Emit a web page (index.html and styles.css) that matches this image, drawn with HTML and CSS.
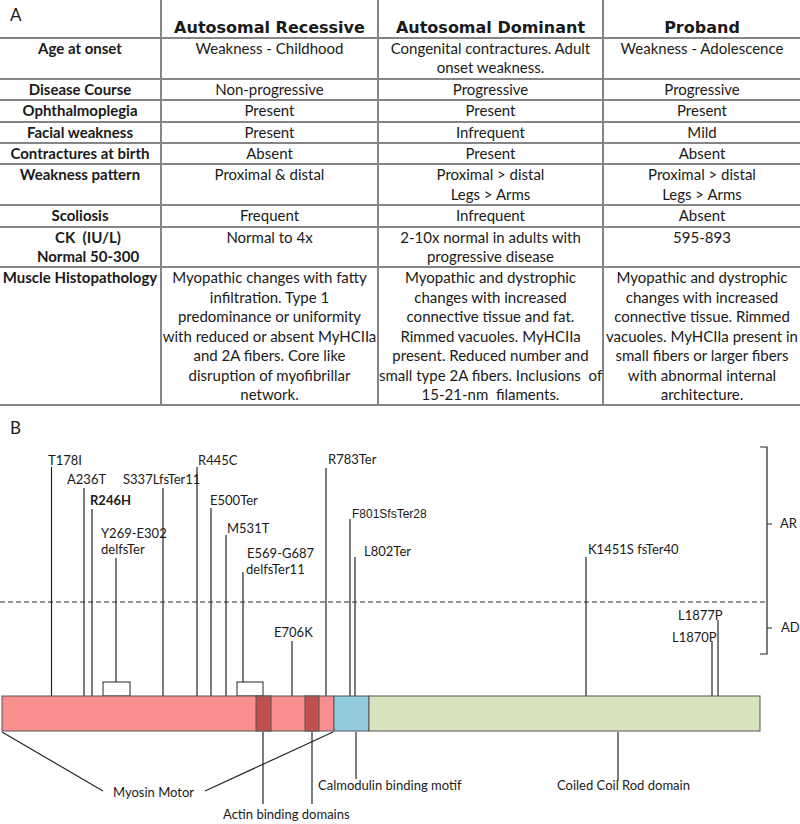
FILE: index.html
```html
<!DOCTYPE html>
<html lang="en">
<head>
<meta charset="utf-8">
<title>MYH2 myopathy comparison</title>
<link rel="stylesheet" href="styles.css">
</head>
<body>
<table class="traits">
  <colgroup><col class="c1"><col class="c2"><col class="c3"><col class="c4"></colgroup>
  <thead>
    <tr class="head-row">
      <th class="panel-letter">A</th>
      <th class="col-head">Autosomal Recessive</th>
      <th class="col-head">Autosomal Dominant</th>
      <th class="col-head">Proband</th>
    </tr>
  </thead>
  <tbody>
    <tr><th>Age at onset</th><td>Weakness - Childhood</td><td>Congenital contractures. Adult<br>onset weakness.</td><td>Weakness - Adolescence</td></tr>
    <tr><th>Disease Course</th><td>Non-progressive</td><td>Progressive</td><td>Progressive</td></tr>
    <tr><th>Ophthalmoplegia</th><td>Present</td><td>Present</td><td>Present</td></tr>
    <tr><th>Facial weakness</th><td>Present</td><td>Infrequent</td><td>Mild</td></tr>
    <tr><th>Contractures at birth</th><td>Absent</td><td>Present</td><td>Absent</td></tr>
    <tr><th>Weakness pattern</th><td>Proximal &amp; distal</td><td>Proximal &gt; distal<br>Legs &gt; Arms</td><td>Proximal &gt; distal<br>Legs &gt; Arms</td></tr>
    <tr><th>Scoliosis</th><td>Frequent</td><td>Infrequent</td><td>Absent</td></tr>
    <tr><th class="ck-label">CK&nbsp; (IU/L)<br>Normal 50-300</th><td>Normal to 4x</td><td>2-10x normal in adults with<br>progressive disease</td><td>595-893</td></tr>
    <tr><th>Muscle Histopathology</th>
      <td>Myopathic changes with fatty<br>infiltration. Type 1<br>predominance or uniformity<br>with reduced or absent MyHCIIa<br>and 2A fibers. Core like<br>disruption of myofibrillar<br>network.</td>
      <td>Myopathic and dystrophic<br>changes with increased<br>connective tissue and fat.<br>Rimmed vacuoles. MyHCIIa<br>present. Reduced number and<br>small type 2A fibers. Inclusions&nbsp; of<br>15-21-nm&nbsp; filaments.</td>
      <td>Myopathic and dystrophic<br>changes with increased<br>connective tissue. Rimmed<br>vacuoles. MyHCIIa present in<br>small fibers or larger fibers<br>with abnormal internal<br>architecture.</td>
    </tr>
  </tbody>
</table>

<svg class="diagram" width="800" height="419" viewBox="0 405 800 419" xmlns="http://www.w3.org/2000/svg">
  <text class="panel" x="10" y="433">B</text>

  <!-- AR / AD divider and brackets -->
  <line class="dash" x1="0" y1="601" x2="767" y2="601"/>
  <path class="ln" d="M760,446 L767,446 L767,523 L772,523 M767,523 L767,653 L760,653 M767,627 L772,627"/>
  <text class="lbl" x="780" y="527">AR</text>
  <text class="lbl" x="781" y="631">AD</text>

  <!-- mutation stems -->
  <g class="ln">
    <line x1="51.5" y1="466" x2="51.5" y2="695"/>
    <line x1="84" y1="487" x2="84" y2="695"/>
    <line x1="92" y1="508" x2="92" y2="695"/>
    <line x1="116" y1="557" x2="116" y2="681"/>
    <line x1="163" y1="487" x2="163" y2="695"/>
    <line x1="197" y1="466" x2="197" y2="695"/>
    <line x1="211" y1="507" x2="211" y2="695"/>
    <line x1="226" y1="534" x2="226" y2="695"/>
    <line x1="243" y1="571" x2="243" y2="681"/>
    <line x1="292" y1="640" x2="292" y2="695"/>
    <line x1="326" y1="467" x2="326" y2="695"/>
    <line x1="350" y1="518" x2="350" y2="695"/>
    <line x1="355" y1="556" x2="355" y2="695"/>
    <line x1="586" y1="556" x2="586" y2="695"/>
    <line x1="712" y1="640" x2="712" y2="695"/>
    <line x1="718" y1="619" x2="718" y2="695"/>
  </g>
  <rect class="del-box" x="103" y="681" width="27" height="14"/>
  <rect class="del-box" x="237" y="681" width="26" height="14"/>

  <!-- protein bar -->
  <rect class="motor" x="2" y="695" width="332" height="35"/>
  <rect class="actin" x="256" y="695" width="15" height="35"/>
  <rect class="actin" x="305" y="695" width="14" height="35"/>
  <rect class="calm" x="334" y="695" width="35" height="35"/>
  <rect class="rod" x="369" y="695" width="391" height="35"/>

  <!-- domain leaders -->
  <g class="ln">
    <line x1="2" y1="731" x2="103" y2="790"/>
    <line x1="333" y1="731" x2="205" y2="790"/>
    <line x1="263" y1="731" x2="263" y2="803"/>
    <line x1="312" y1="731" x2="312" y2="803"/>
    <line x1="356" y1="731" x2="356" y2="778"/>
    <line x1="618" y1="731" x2="618" y2="780"/>
  </g>

  <!-- mutation labels -->
  <text class="lbl" x="48" y="464">T178I</text>
  <text class="lbl" x="67" y="483">A236T</text>
  <text class="lbl lbl-b" x="90" y="504">R246H</text>
  <text class="lbl" x="101" y="537">Y269-E302</text>
  <text class="lbl" x="101" y="553">delfsTer</text>
  <text class="lbl" x="123" y="483">S337LfsTer11</text>
  <text class="lbl" x="198" y="464">R445C</text>
  <text class="lbl" x="210" y="504">E500Ter</text>
  <text class="lbl" x="227" y="532">M531T</text>
  <text class="lbl" x="247" y="557">E569-G687</text>
  <text class="lbl" x="246" y="573">delfsTer11</text>
  <text class="lbl" x="274" y="636">E706K</text>
  <text class="lbl" x="328" y="463">R783Ter</text>
  <text class="lbl lbl-arial" x="352" y="517">F801SfsTer28</text>
  <text class="lbl" x="364" y="555">L802Ter</text>
  <text class="lbl" x="588" y="553">K1451S fsTer40</text>
  <text class="lbl" x="678" y="619">L1877P</text>
  <text class="lbl" x="672" y="641">L1870P</text>

  <!-- domain labels -->
  <text class="lbl" x="113" y="796">Myosin Motor</text>
  <text class="lbl" x="223" y="818">Actin binding domains</text>
  <text class="lbl" x="318" y="789">Calmodulin binding motif</text>
  <text class="lbl" x="557" y="789">Coiled Coil Rod domain</text>
</svg>
</body>
</html>
```

FILE: styles.css
```css
html, body {
  margin: 0;
  padding: 0;
  background: #ffffff;
}

body {
  width: 800px;
  height: 824px;
  overflow: hidden;
  color: #1a1a1a;
  font-family: Lato, "Open Sans", sans-serif;
}

.traits {
  width: 800px;
  table-layout: fixed;
  border-collapse: collapse;
  font-family: Lato, "Open Sans", sans-serif;
  font-size: 15px;
  line-height: 19.4px;
}

.c1 { width: 161px; }
.c2 { width: 217px; }
.c3 { width: 225px; }
.c4 { width: 197px; }

.traits th,
.traits td {
  border: 2px solid #858585;
  padding: 0;
  text-align: center;
  vertical-align: top;
  white-space: nowrap;
  font-weight: normal;
  color: #1a1a1a;
}

.traits tbody th {
  font-weight: 700;
}

.traits tr > :first-child { border-left: none; }
.traits tr > :last-child { border-right: none; }

.traits thead th {
  border-top: none;
}

.traits .col-head {
  height: 36px;
  vertical-align: bottom;
  font-family: "DejaVu Sans", sans-serif;
  font-weight: 700;
  font-size: 16px;
  line-height: 16px;
  padding-bottom: 1px;
}

.traits .panel-letter {
  height: 31px;
  text-align: left;
  vertical-align: top;
  font-size: 17px;
  line-height: 20px;
  padding: 5px 0 0 10px;
}

.traits .ck-label {
  padding-left: 16px;
}

.diagram {
  display: block;
}

.diagram .panel {
  font-family: Lato, "Open Sans", sans-serif;
  font-size: 17px;
  fill: #1a1a1a;
}

.diagram .lbl {
  font-family: Lato, "Open Sans", sans-serif;
  font-size: 13px;
  fill: #1a1a1a;
}

.diagram .lbl-b {
  font-weight: 700;
}

.diagram .lbl-arial {
  font-family: "Liberation Sans", Arial, sans-serif;
  font-size: 12px;
}

.diagram .ln,
.diagram .ln line {
  stroke: #262626;
  stroke-width: 1.2;
  fill: none;
}

.diagram .dash {
  stroke: #262626;
  stroke-width: 1.2;
  stroke-dasharray: 5 3;
}

.diagram .del-box {
  fill: #ffffff;
  stroke: #262626;
  stroke-width: 1;
}

.diagram .motor { fill: #f98f8f; stroke: #555; stroke-width: 1; }
.diagram .actin { fill: #c0504d; stroke: #555; stroke-width: 1; }
.diagram .calm { fill: #92cbdc; stroke: #555; stroke-width: 1; }
.diagram .rod { fill: #d7e4bd; stroke: #555; stroke-width: 1; }
```
